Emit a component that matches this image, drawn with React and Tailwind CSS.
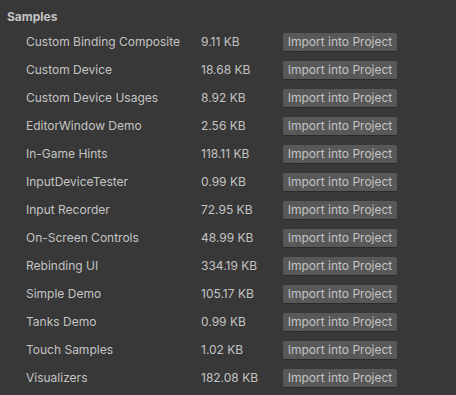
import React from "react";

const samples = [
  { name: "Custom Binding Composite", size: "9.11 KB" },
  { name: "Custom Device", size: "18.68 KB" },
  { name: "Custom Device Usages", size: "8.92 KB" },
  { name: "EditorWindow Demo", size: "2.56 KB" },
  { name: "In-Game Hints", size: "118.11 KB" },
  { name: "InputDeviceTester", size: "0.99 KB" },
  { name: "Input Recorder", size: "72.95 KB" },
  { name: "On-Screen Controls", size: "48.99 KB" },
  { name: "Rebinding UI", size: "334.19 KB" },
  { name: "Simple Demo", size: "105.17 KB" },
  { name: "Tanks Demo", size: "0.99 KB" },
  { name: "Touch Samples", size: "1.02 KB" },
  { name: "Visualizers", size: "182.08 KB" },
];

function ImportButton() {
  return (
    <button className="h-[19px] w-[114px] bg-[#585858] border-b border-[#2a2a2a] rounded-[2px] text-[12px] text-[#c4c4c4] leading-none flex items-center justify-center whitespace-nowrap">
      Import into Project
    </button>
  );
}

export default function App() {
  return (
    <div
      className="w-[456px] h-[395px] bg-[#383838] text-[#c4c4c4] overflow-hidden"
      style={{ fontFamily: "Inter, 'Noto Sans', sans-serif" }}
    >
      <div className="pl-[7px] pt-[9px] h-[28px] text-[12px] font-bold leading-[16px]">
        Samples
      </div>
      <div className="flex flex-col pl-[26px]">
        {samples.map((s) => (
          <div key={s.name} className="flex items-center h-[28px] text-[12px] whitespace-nowrap">
            <span className="w-[175px] shrink-0">{s.name}</span>
            <span className="w-[82px] shrink-0">{s.size}</span>
            <ImportButton />
          </div>
        ))}
      </div>
    </div>
  );
}
